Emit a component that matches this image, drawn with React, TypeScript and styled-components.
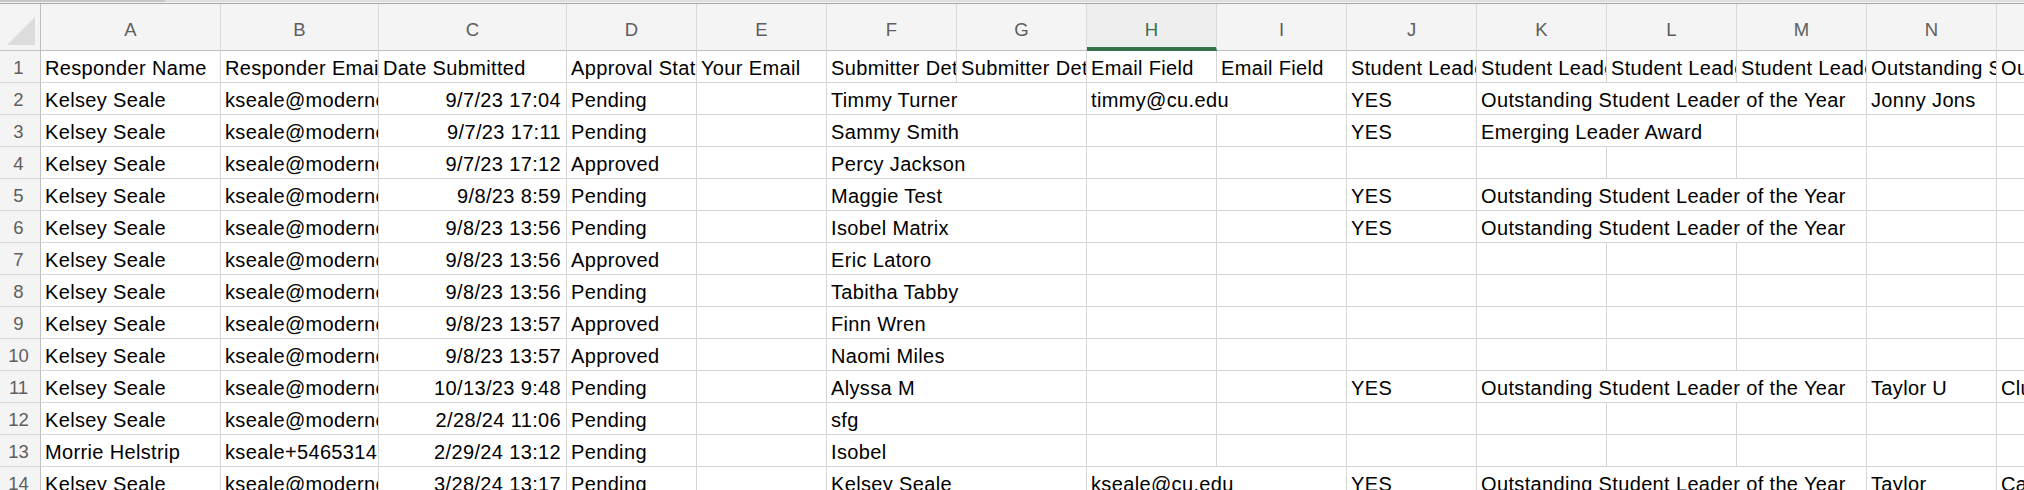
import React from 'react';
import styled, { createGlobalStyle } from 'styled-components';

const GlobalStyle = createGlobalStyle`
  html, body {
    margin: 0;
    padding: 0;
    background: #ffffff;
    overflow: hidden;
  }
`;

const GRID = '#d5d5d5';
const HEAD_LINE = '#bfbfbf';
const HEAD_BG = '#f4f4f4';
const ACTIVE = '#347348';

const COLUMNS = [
  { key: 'A', w: 180 },
  { key: 'B', w: 158 },
  { key: 'C', w: 188 },
  { key: 'D', w: 130 },
  { key: 'E', w: 130 },
  { key: 'F', w: 130 },
  { key: 'G', w: 130 },
  { key: 'H', w: 130 },
  { key: 'I', w: 130 },
  { key: 'J', w: 130 },
  { key: 'K', w: 130 },
  { key: 'L', w: 130 },
  { key: 'M', w: 130 },
  { key: 'N', w: 130 },
  { key: 'O', w: 130 },
];

const ACTIVE_COL = 'H';

const Sheet = styled.div`
  width: 2024px;
  height: 490px;
  overflow: hidden;
  background: #ffffff;
  font-family: 'Liberation Sans', Arial, sans-serif;
`;

const TopEdge = styled.div`
  display: flex;
  height: 2px;
`;

const EdgeTab = styled.div`
  width: 165px;
  background: #c6c6c6;
`;

const EdgeRest = styled.div`
  flex: 1;
  background: #dedede;
`;

const EdgeLine = styled.div`
  height: 1px;
  background: #f3f3f3;
  border-bottom: 1px solid #a8a8a8;
`;

const HeaderRow = styled.div`
  display: flex;
  height: 47px;
  background: ${HEAD_BG};
`;

const Corner = styled.div`
  flex: none;
  width: 41px;
  box-sizing: border-box;
  border-right: 1px solid ${HEAD_LINE};
  border-bottom: 1px solid ${HEAD_LINE};
  display: flex;
  align-items: flex-end;
  justify-content: flex-end;
  padding: 0 4px 4px 0;
`;

const ColHead = styled.div<{ $w: number; $active?: boolean }>`
  flex: none;
  width: ${(p) => p.$w}px;
  box-sizing: border-box;
  border-right: 1px solid #dadada;
  border-bottom: ${(p) => (p.$active ? `4px solid ${ACTIVE}` : `1px solid ${HEAD_LINE}`)};
  background: ${(p) => (p.$active ? '#eeeeee' : HEAD_BG)};
  padding-top: 15px;
  text-align: center;
  font-size: 18.5px;
  line-height: 22px;
  color: ${(p) => (p.$active ? ACTIVE : '#5e5e5e')};
`;

const Row = styled.div`
  display: flex;
  height: 32px;
`;

const RowNum = styled.div`
  flex: none;
  width: 41px;
  box-sizing: border-box;
  border-right: 1px solid ${HEAD_LINE};
  border-bottom: 1px solid #d9d9d9;
  background: ${HEAD_BG};
  padding: 2px 3px 0 0;
  text-align: center;
  font-size: 18.5px;
  line-height: 30px;
  color: #5e5e5e;
`;

const Cell = styled.div<{ $w: number; $right?: boolean }>`
  flex: none;
  width: ${(p) => p.$w}px;
  box-sizing: border-box;
  border-right: 1px solid ${GRID};
  border-bottom: 1px solid ${GRID};
  padding: 2px 5px 0 4px;
  font-size: 20px;
  letter-spacing: 0.35px;
  line-height: 30px;
  color: #000000;
  white-space: nowrap;
  overflow: hidden;
  text-align: ${(p) => (p.$right ? 'right' : 'left')};
`;

type CellData = { text?: string; span?: number; right?: boolean };

type Record = {
  name: string;
  email: string;
  date: string;
  status: string;
  submitter: string;
  field?: string;
  leader?: string;
  award?: string;
  nominee?: string;
  extra?: string;
};

const EMAIL = 'kseale@moderncampus.com';

const records: Record[] = [
  { name: 'Kelsey Seale', email: EMAIL, date: '9/7/23 17:04', status: 'Pending', submitter: 'Timmy Turner', field: 'timmy@cu.edu', leader: 'YES', award: 'Outstanding Student Leader of the Year', nominee: 'Jonny Jons' },
  { name: 'Kelsey Seale', email: EMAIL, date: '9/7/23 17:11', status: 'Pending', submitter: 'Sammy Smith', leader: 'YES', award: 'Emerging Leader Award' },
  { name: 'Kelsey Seale', email: EMAIL, date: '9/7/23 17:12', status: 'Approved', submitter: 'Percy Jackson' },
  { name: 'Kelsey Seale', email: EMAIL, date: '9/8/23 8:59', status: 'Pending', submitter: 'Maggie Test', leader: 'YES', award: 'Outstanding Student Leader of the Year' },
  { name: 'Kelsey Seale', email: EMAIL, date: '9/8/23 13:56', status: 'Pending', submitter: 'Isobel Matrix', leader: 'YES', award: 'Outstanding Student Leader of the Year' },
  { name: 'Kelsey Seale', email: EMAIL, date: '9/8/23 13:56', status: 'Approved', submitter: 'Eric Latoro' },
  { name: 'Kelsey Seale', email: EMAIL, date: '9/8/23 13:56', status: 'Pending', submitter: 'Tabitha Tabby' },
  { name: 'Kelsey Seale', email: EMAIL, date: '9/8/23 13:57', status: 'Approved', submitter: 'Finn Wren' },
  { name: 'Kelsey Seale', email: EMAIL, date: '9/8/23 13:57', status: 'Approved', submitter: 'Naomi Miles' },
  { name: 'Kelsey Seale', email: EMAIL, date: '10/13/23 9:48', status: 'Pending', submitter: 'Alyssa M', leader: 'YES', award: 'Outstanding Student Leader of the Year', nominee: 'Taylor U', extra: 'Club Officer' },
  { name: 'Kelsey Seale', email: EMAIL, date: '2/28/24 11:06', status: 'Pending', submitter: 'sfg' },
  { name: 'Morrie Helstrip', email: 'kseale+54653143@moderncampus.com', date: '2/29/24 13:12', status: 'Pending', submitter: 'Isobel' },
  { name: 'Kelsey Seale', email: EMAIL, date: '3/28/24 13:17', status: 'Pending', submitter: 'Kelsey Seale', field: 'kseale@cu.edu', leader: 'YES', award: 'Outstanding Student Leader of the Year', nominee: 'Taylor', extra: 'Campus Leader' },
];

const headings: CellData[] = [
  'Responder Name',
  'Responder Email',
  'Date Submitted',
  'Approval Status',
  'Your Email',
  'Submitter Details',
  'Submitter Details',
  'Email Field',
  'Email Field',
  'Student Leader Award',
  'Student Leader Award',
  'Student Leader Award',
  'Student Leader Award',
  'Outstanding Student Leader',
  'Outstanding Student Leader',
].map((text) => ({ text }));

// long text spills into the empty cells to its right, so those cells are merged
const toCells = (r: Record): CellData[] => {
  const cells: CellData[] = [
    { text: r.name },
    { text: r.email },
    { text: r.date, right: true },
    { text: r.status },
    {},
    { text: r.submitter, span: 2 },
  ];
  if (r.field) cells.push({ text: r.field, span: 2 });
  else cells.push({}, {});
  cells.push({ text: r.leader });
  if (r.award) {
    const span = r.award.length > 24 ? 3 : 2;
    cells.push({ text: r.award, span });
    for (let i = span; i < 3; i++) cells.push({});
  } else {
    cells.push({}, {}, {});
  }
  cells.push({ text: r.nominee }, { text: r.extra });
  return cells;
};

const SheetRow = ({ index, cells }: { index: number; cells: CellData[] }) => {
  let col = 0;
  return (
    <Row>
      <RowNum>{index}</RowNum>
      {cells.map((c, i) => {
        const span = c.span ?? 1;
        const w = COLUMNS.slice(col, col + span).reduce((s, k) => s + k.w, 0);
        col += span;
        return (
          <Cell key={i} $w={w} $right={c.right}>
            {c.text}
          </Cell>
        );
      })}
    </Row>
  );
};

const SelectAll = () => (
  <svg width="30" height="30" viewBox="0 0 30 30">
    <polygon points="1,29 29,29 29,1" fill="#dcdcdc" />
  </svg>
);

const App = () => {
  return (
    <>
      <GlobalStyle />
      <Sheet>
        <TopEdge>
          <EdgeTab />
          <EdgeRest />
        </TopEdge>
        <EdgeLine />
        <HeaderRow>
          <Corner>
            <SelectAll />
          </Corner>
          {COLUMNS.map((c) => (
            <ColHead key={c.key} $w={c.w} $active={c.key === ACTIVE_COL}>
              {c.key}
            </ColHead>
          ))}
        </HeaderRow>
        <SheetRow index={1} cells={headings} />
        {records.map((r, i) => (
          <SheetRow key={i} index={i + 2} cells={toCells(r)} />
        ))}
      </Sheet>
    </>
  );
};

export default App;
